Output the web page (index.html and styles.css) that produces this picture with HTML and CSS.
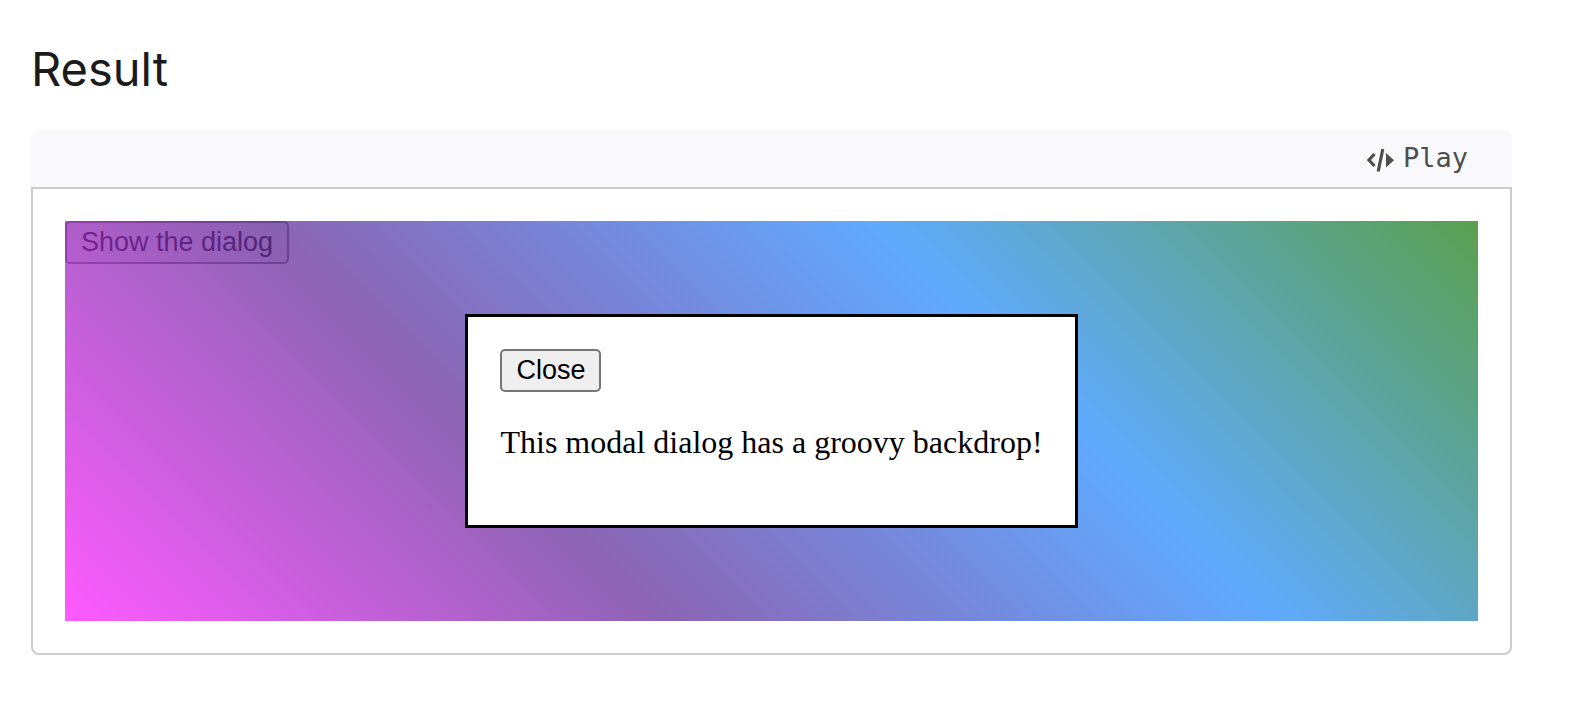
FILE: index.html
```html
<!DOCTYPE html>
<html lang="en">
<head>
    <meta charset="UTF-8">
    <title>Result</title>
    <link rel="stylesheet" href="styles.css">
</head>
<body>
    <h2 class="title">Result</h2>
    <section class="sample">
        <header class="sample-header">
            <button type="button" class="play">
                <svg class="play-icon" viewBox="0 0 28 24" aria-hidden="true">
                    <path d="M7.5 6 L2 12 L7.5 18 M15.8 1 L11.2 23.5" fill="none" stroke="currentColor" stroke-width="3.2"/>
                    <path d="M19 5 L27 12.2 L19 19.5 Z" fill="currentColor"/>
                </svg>
                Play
            </button>
        </header>
        <div class="sample-body">
            <div class="stage">
                <button type="button" class="btn show">Show the dialog</button>
                <div class="backdrop">
                    <dialog class="dialog" open>
                        <button type="button" class="btn close">Close</button>
                        <p class="text">This modal dialog has a groovy backdrop!</p>
                    </dialog>
                </div>
            </div>
        </div>
    </section>

    <script>
        var backdrop = document.querySelector(".backdrop");

        document.querySelector(".show").addEventListener("click", function () {
            backdrop.hidden = false;
        });

        document.querySelector(".close").addEventListener("click", function () {
            backdrop.hidden = true;
        });
    </script>
</body>
</html>
```
FILE: styles.css
```css
body {
    margin: 0;
    padding: 39px 60px 39px 31px;
    background-color: #fff;
    color: #1b1b1b;
    font-family: Inter, sans-serif;
}

.title {
    margin: 0 0 31px;
    font-size: 47px;
    font-weight: 400;
    line-height: 60px;
}

.sample-header {
    display: flex;
    justify-content: flex-end;
    padding: 0 44px 2px;
    background-color: #f9f9fb;
    border-radius: 8px 8px 0 0;
}

.play {
    display: flex;
    align-items: center;
    gap: 8px;
    padding: 0;
    border: none;
    background: none;
    color: #4e4e4e;
    font-family: "DejaVu Sans Mono", monospace;
    font-size: 27px;
    line-height: 55px;
    cursor: pointer;
}

.play-icon {
    width: 28px;
    height: 24px;
    margin-top: 4px;
}

.sample-body {
    padding: 32px;
    border: 2px solid #cdcdcd;
    border-radius: 0 0 8px 8px;
}

.stage {
    position: relative;
    min-height: 400px;
}

.btn {
    display: block;
    padding: 2px 14px;
    border: 2px solid #767676;
    border-radius: 5px;
    background-color: #efefef;
    color: #000;
    font-family: "Liberation Sans", Arial, sans-serif;
    font-size: 27px;
    line-height: 35px;
}

.backdrop {
    position: absolute;
    inset: 0;
    display: grid;
    place-items: center;
    background-image: linear-gradient(45deg,
        rgba(255, 35, 255, 0.75),
        rgba(101, 49, 155, 0.75),
        rgba(43, 142, 255, 0.75),
        rgba(35, 128, 21, 0.75));
}

.backdrop[hidden] {
    display: none;
}

.dialog {
    position: static;
    margin: 0;
    padding: 32px;
    border: 3px solid #000;
    background-color: #fff;
    color: #000;
}

.text {
    margin: 32px 0;
    font-family: "Liberation Serif", "Times New Roman", serif;
    font-size: 32px;
    line-height: 37px;
}
```
